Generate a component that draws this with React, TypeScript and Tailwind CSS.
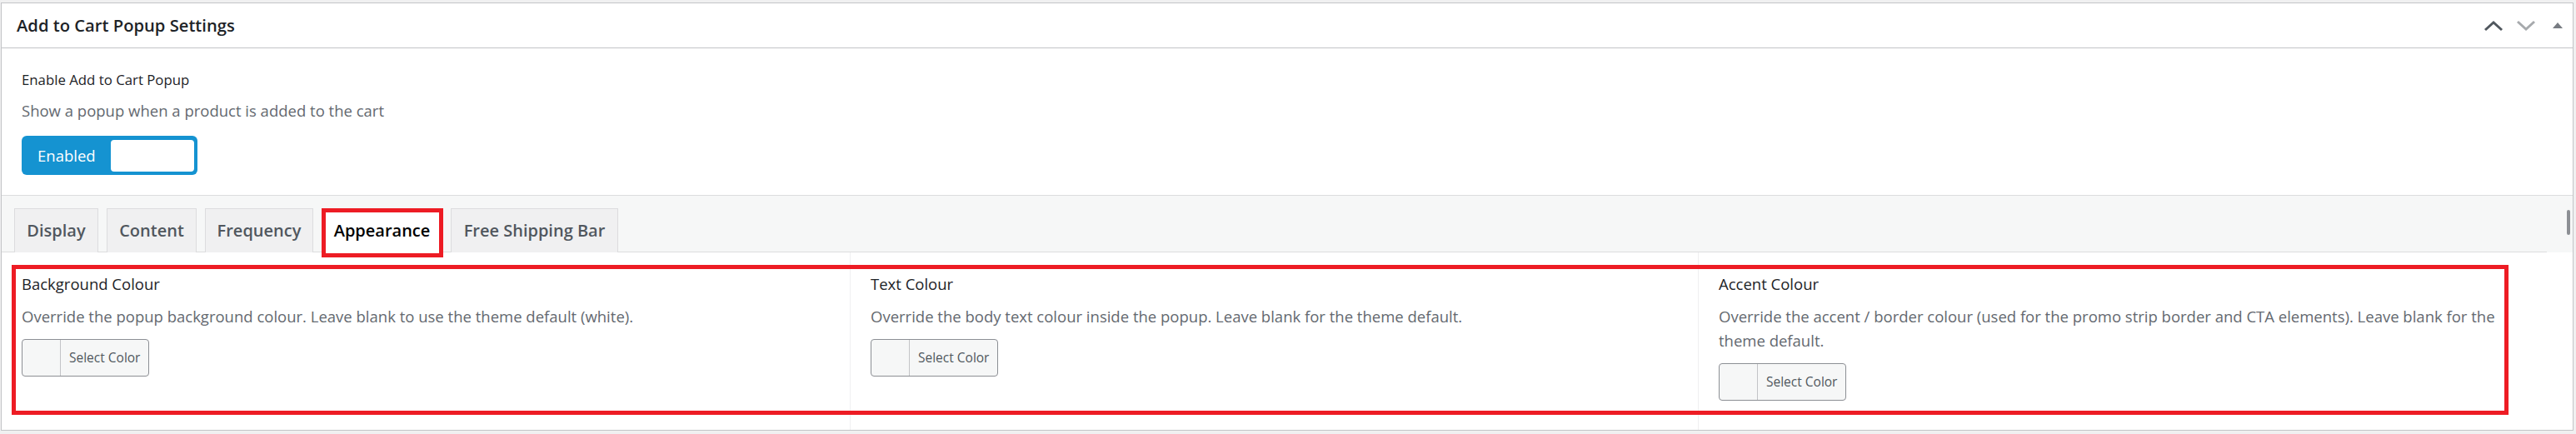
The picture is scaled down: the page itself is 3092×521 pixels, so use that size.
import React from "react";

const tabs = [
  { label: "Display", width: "w-[101px]" },
  { label: "Content", width: "w-[108px]" },
  { label: "Frequency", width: "w-[130px]" },
  { label: "Appearance", width: "w-[145px]", active: true },
  { label: "Free Shipping Bar", width: "w-[201px]" },
];

const colourFields = [
  {
    title: "Background Colour",
    desc: "Override the popup background colour. Leave blank to use the theme default (white).",
    width: "w-[1019px]",
  },
  {
    title: "Text Colour",
    desc: "Override the body text colour inside the popup. Leave blank for the theme default.",
    width: "w-[1018px]",
  },
  {
    title: "Accent Colour",
    desc: "Override the accent / border colour (used for the promo strip border and CTA elements). Leave blank for the theme default.",
    width: "w-[1018px]",
  },
];

function ChevronUp() {
  return (
    <svg width="24" height="14" viewBox="0 0 24 14" fill="none">
      <path d="M2 12 L12 3 L22 12" stroke="#50575e" strokeWidth="3" />
    </svg>
  );
}

function ChevronDown() {
  return (
    <svg width="24" height="14" viewBox="0 0 24 14" fill="none">
      <path d="M2 2 L12 11 L22 2" stroke="#a7aaad" strokeWidth="3" />
    </svg>
  );
}

function Triangle() {
  return (
    <svg width="14" height="9" viewBox="0 0 14 9">
      <path d="M1 8 L7 1 L13 8 Z" fill="#787c82" />
    </svg>
  );
}

function ColorButton() {
  return (
    <button
      type="button"
      className="flex h-[45px] w-[153px] items-stretch rounded-[4px] border border-[#8c8f94] bg-[#f6f7f7]"
    >
      <span className="w-[46px] border-r border-[#c3c4c7]" />
      <span className="flex items-center pl-[10px] text-[15.5px] text-[#50575e]">Select Color</span>
    </button>
  );
}

export default function App() {
  return (
    <div
      className="h-[521px] w-[3092px] overflow-hidden bg-[#f0f0f1] pl-[1px] pt-[3px]"
      style={{ fontFamily: '"Open Sans", "Noto Sans", sans-serif' }}
    >
      <div className="w-[3088px] border border-[#c3c4c7] bg-white">
        {/* header */}
        <div className="flex h-[54px] items-center justify-between border-b border-[#c3c4c7] pl-[18px]">
          <h2 className="text-[20.2px] font-semibold text-[#1d2327]">Add to Cart Popup Settings</h2>
          <div className="flex h-full items-center">
            <span className="flex w-[39px] justify-center">
              <ChevronUp />
            </span>
            <span className="flex w-[40px] justify-center">
              <ChevronDown />
            </span>
            <span className="flex w-[36px] justify-center">
              <Triangle />
            </span>
          </div>
        </div>

        {/* enable section */}
        <div className="border-b border-[#dcdcde] pb-[24px] pl-[24px] pt-[25px]">
          <p className="text-[16.8px] leading-[26px] text-[#1d2327]">Enable Add to Cart Popup</p>
          <p className="mt-[11px] text-[18.5px] leading-[26px] text-[#646970]">
            Show a popup when a product is added to the cart
          </p>
          <div className="mt-[17px] flex h-[47px] w-[211px] items-center justify-between rounded-[6px] bg-[#1593d1] pl-[19px] pr-[4px]">
            <span className="text-[18.5px] text-white">Enabled</span>
            <span className="h-[38px] w-[100px] rounded-[4px] bg-white" />
          </div>
        </div>

        {/* tabs */}
        <div className="flex bg-[#f6f7f7]">
          <div className="flex w-[3055px] gap-[10px] border-b border-[#dcdcde] pl-[15px] pt-[15px]">
            {tabs.map((tab) => (
              <div
                key={tab.label}
                className={`relative -mb-[1px] flex h-[53px] items-center justify-center border border-b-0 text-[20px] font-semibold ${tab.width} ${
                  tab.active
                    ? "border-[#dcdcde] bg-white text-black"
                    : "border-[#dcdcde] bg-[#f0f0f1] text-[#50575e]"
                }`}
              >
                {tab.label}
                {tab.active && (
                  <span className="absolute -bottom-[6px] -left-[1px] -right-[2px] -top-[1px] border-[5px] border-[#ed1c24]" />
                )}
              </div>
            ))}
          </div>
          <div className="flex flex-1 justify-end pr-[3px] pt-[17px]">
            <span className="h-[30px] w-[4px] rounded-full bg-[#8c8f94]" />
          </div>
        </div>

        {/* colour fields */}
        <div className="relative flex h-[213px]">
          {colourFields.map((field, i) => (
            <div
              key={field.title}
              className={`${field.width} pl-[24px] pr-[24px] pt-[25px] ${i < 2 ? "border-r border-[#f0f0f1]" : ""}`}
            >
              <p className="text-[18.5px] leading-[26px] text-[#1d2327]">{field.title}</p>
              <p className="mt-[11px] text-[18.5px] leading-[29px] text-[#646970]">{field.desc}</p>
              <div className="mt-[13px]">
                <ColorButton />
              </div>
            </div>
          ))}
          <span className="absolute left-[12px] top-[15px] h-[180px] w-[2997px] border-[5px] border-[#ed1c24]" />
        </div>
      </div>
    </div>
  );
}
